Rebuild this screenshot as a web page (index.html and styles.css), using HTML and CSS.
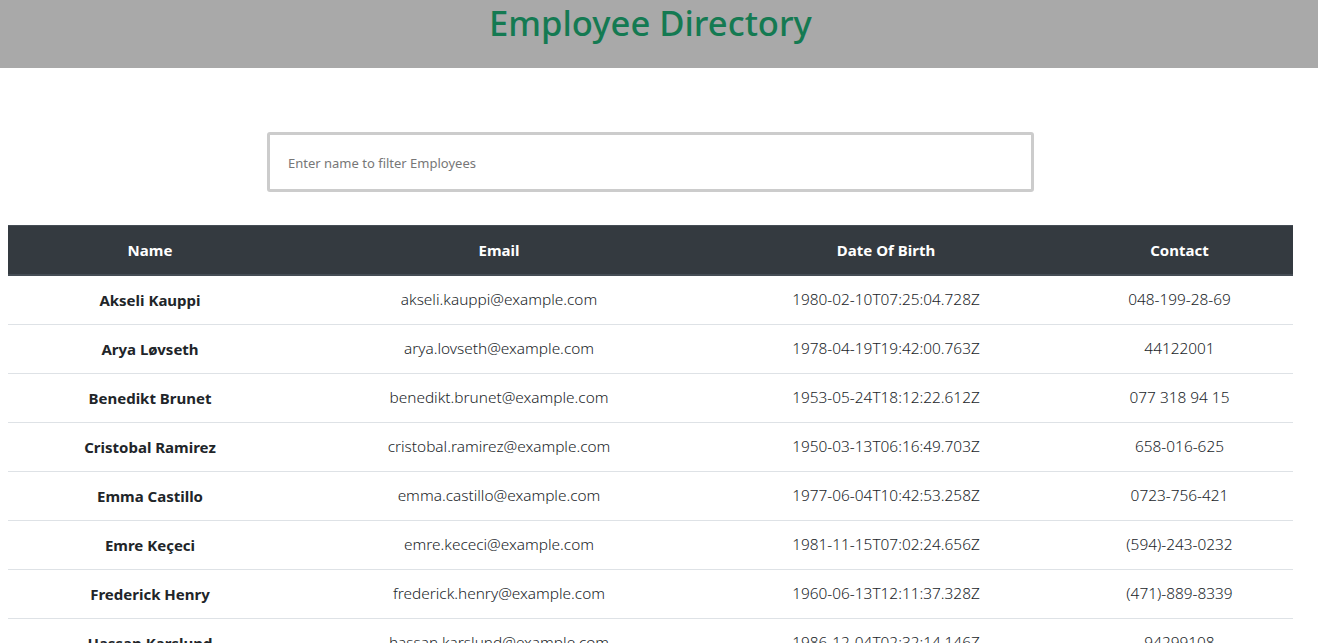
FILE: index.html
```html
<!DOCTYPE html>
<html lang="en">
<head>
<meta charset="utf-8">
<title>Employee Directory</title>
<link rel="stylesheet" href="styles.css">
</head>
<body>
<header class="topbar">
  <div class="topbar-inner"><h1 class="title">Employee Directory</h1></div>
</header>
<main class="page">
  <div class="search-wrap">
    <input class="search" type="text" placeholder="Enter name to filter Employees">
  </div>
  <table class="directory">
    <colgroup>
      <col class="c-name"><col class="c-email"><col class="c-dob"><col class="c-contact">
    </colgroup>
    <thead>
      <tr><th>Name</th><th>Email</th><th>Date Of Birth</th><th>Contact</th></tr>
    </thead>
    <tbody>
      <tr><td class="name">Akseli Kauppi</td><td>akseli.kauppi@example.com</td><td>1980-02-10T07:25:04.728Z</td><td>048-199-28-69</td></tr>
      <tr><td class="name">Arya Løvseth</td><td>arya.lovseth@example.com</td><td>1978-04-19T19:42:00.763Z</td><td>44122001</td></tr>
      <tr><td class="name">Benedikt Brunet</td><td>benedikt.brunet@example.com</td><td>1953-05-24T18:12:22.612Z</td><td>077 318 94 15</td></tr>
      <tr><td class="name">Cristobal Ramirez</td><td>cristobal.ramirez@example.com</td><td>1950-03-13T06:16:49.703Z</td><td>658-016-625</td></tr>
      <tr><td class="name">Emma Castillo</td><td>emma.castillo@example.com</td><td>1977-06-04T10:42:53.258Z</td><td>0723-756-421</td></tr>
      <tr><td class="name">Emre Keçeci</td><td>emre.kececi@example.com</td><td>1981-11-15T07:02:24.656Z</td><td>(594)-243-0232</td></tr>
      <tr><td class="name">Frederick Henry</td><td>frederick.henry@example.com</td><td>1960-06-13T12:11:37.328Z</td><td>(471)-889-8339</td></tr>
      <tr><td class="name">Hassan Karslund</td><td>hassan.karslund@example.com</td><td>1986-12-04T02:32:14.146Z</td><td>94299108</td></tr>
    </tbody>
  </table>
</main>
</body>
</html>
```

FILE: styles.css
```css
html, body {
  margin: 0;
  padding: 0;
  overflow: hidden;
}
body {
  font-family: "Noto Sans", "Open Sans", sans-serif;
  color: #212529;
  background: #fff;
}
.topbar {
  background: #a9a9a9;
  height: 68px;
}
.topbar-inner {
  width: 1301px;
  text-align: center;
}
.title {
  margin: 0;
  padding-top: 1px;
  font-size: 34.6px;
  line-height: 44px;
  font-weight: 500;
  color: #147a52;
}
.page {
  width: 1285px;
  margin-left: 8px;
}
.search-wrap {
  display: flex;
  justify-content: center;
  padding-top: 64px;
  padding-bottom: 33px;
}
.search {
  box-sizing: border-box;
  width: 767px;
  height: 60px;
  border: 3px solid #cccccc;
  border-radius: 3px;
  padding: 2px 18px 0;
  font-family: inherit;
  font-size: 13px;
  outline: none;
}
.search::placeholder {
  color: #777;
}
.directory {
  width: 1285px;
  border-collapse: collapse;
  table-layout: fixed;
  font-size: 15.4px;
}
.c-name { width: 284px; }
.c-email { width: 414px; }
.c-dob { width: 360px; }
.c-contact { width: 227px; }
.directory th {
  background: #343a40;
  color: #fff;
  font-size: 15px;
  font-weight: 700;
  padding: 12px;
  line-height: 24px;
  border-top: 1px solid #454d55;
  border-bottom: 2px solid #454d55;
  text-align: center;
}
.directory td {
  padding: 12px;
  line-height: 24px;
  text-align: center;
  font-weight: 300;
  border-bottom: 1px solid #dee2e6;
}
.directory td.name {
  font-size: 15px;
  font-weight: 700;
}
```
